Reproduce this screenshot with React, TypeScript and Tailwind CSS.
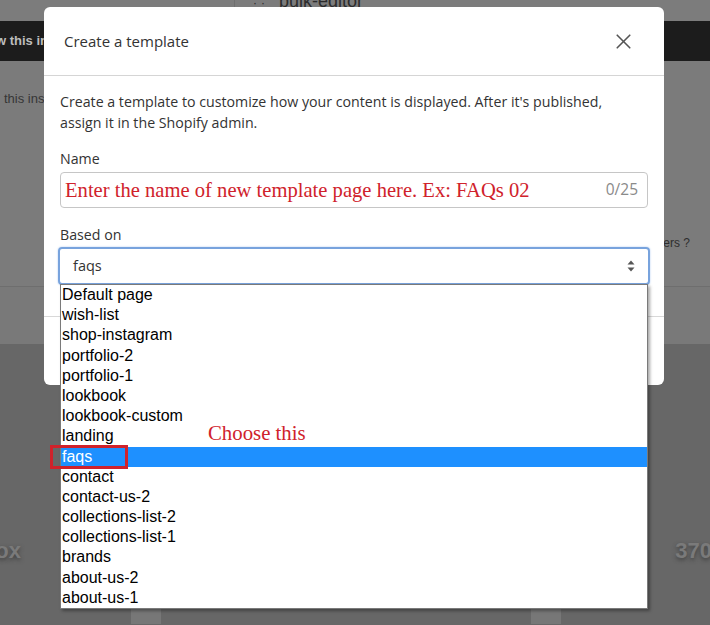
import { X } from "lucide-react";

const templates = [
  "Default page",
  "wish-list",
  "shop-instagram",
  "portfolio-2",
  "portfolio-1",
  "lookbook",
  "lookbook-custom",
  "landing",
  "faqs",
  "contact",
  "contact-us-2",
  "collections-list-2",
  "collections-list-1",
  "brands",
  "about-us-2",
  "about-us-1",
];

function SelectArrows() {
  return (
    <svg width="10" height="14" viewBox="0 0 10 14" className="text-[#555]">
      <path d="M5 1.5 L8.5 5.5 H1.5 Z" fill="currentColor" />
      <path d="M5 12.5 L8.5 8.5 H1.5 Z" fill="currentColor" />
    </svg>
  );
}

export default function App() {
  return (
    <div className="relative h-[625px] w-[710px] overflow-hidden bg-[#676767] font-['Liberation_Sans',sans-serif]">
      {/* dimmed page behind the modal */}
      <div className="flex h-[21px] bg-[#7c7c7c]">
        <div className="w-[235px] border-r border-[#6f6f6f]" />
        <div className="flex-1 overflow-hidden pl-[18px]">
          <div className="-mt-[9px] text-[18px] leading-[20px] text-[#2c2c2c]">
            <span className="mr-[10px] text-[12px] tracking-[4px]">··</span>bulk-editor
          </div>
        </div>
      </div>
      <div className="flex h-[40px] items-center bg-[#1c1c1c]">
        <span className="-ml-[4px] text-[13px] font-bold text-[#bdbdbd]">w this ins</span>
      </div>
      <div className="h-[226px] border-b border-[#6e6e6e] bg-[#7b7b7b]">
        <div className="pl-[4px] pt-[28px] text-[13px] text-[#363636]">this ins</div>
        <div className="mt-[125px] pr-[20px] text-right text-[12px] text-[#2e2e2e]">Can I change the covers ?</div>
      </div>
      <div className="h-[57px] bg-[#797979]" />
      <div className="flex h-[280px] flex-col">
        <div className="flex h-[263px] items-end justify-between pb-[40px] text-[22px] font-bold text-[#7a7a7a] [text-shadow:0_2px_4px_#3f3f3f]">
          <div className="flex w-[21px] justify-end">
            <span>box</span>
          </div>
          <span className="-mr-[2px]">370</span>
        </div>
        <div className="flex flex-1">
          <div className="ml-[131px] w-[30px] bg-[#777]" />
          <div className="ml-[370px] w-[30px] bg-[#777]" />
        </div>
      </div>

      {/* modal */}
      <div className="absolute left-[44px] top-[7px] h-[378px] w-[620px] rounded-[6px] bg-white font-['Open_Sans',sans-serif] text-[#333]">
        <div className="flex h-[69px] items-center justify-between border-b border-[#d5d5d5] pl-[20px] pr-[28px]">
          <span className="text-[15px] text-[#333]">Create a template</span>
          <X className="h-[25px] w-[25px] text-[#555]" strokeWidth={1.6} />
        </div>
        <div className="px-[16px] pt-[15px]">
          <p className="text-[14.2px] leading-[21px]">
            Create a template to customize how your content is displayed. After it's published,
            <br />
            assign it in the Shopify admin.
          </p>
          <div className="mt-[15px] text-[14.2px] leading-[21px]">Name</div>
          <div className="mt-[3px] flex h-[36px] items-center justify-between rounded-[4px] border border-[#c6c6c6] pl-[4px] pr-[9px]">
            <span className="font-['Liberation_Serif',serif] text-[20.6px] text-[#d0222b]">
              Enter the name of new template page here. Ex: FAQs 02
            </span>
            <span className="text-[15.5px] text-[#8a8a8a]">0/25</span>
          </div>
          <div className="mt-[16px] text-[14.2px] leading-[21px]">Based on</div>
          <div className="-mx-[2px] mt-[2px] flex h-[38px] items-center justify-between rounded-[4px] border-2 border-[#78a3dd] pl-[13px] pr-[12px] shadow-[0_0_2px_#a9c6ee]">
            <span className="text-[14.5px] text-[#333]">faqs</span>
            <SelectArrows />
          </div>
        </div>
        <div className="mt-[31px] border-t border-[#d8d8d8]" />
      </div>

      {/* open select list */}
      <div className="absolute left-[60px] top-[284px] w-[588px] border border-[#7a7a7a] bg-white shadow-[2px_2px_3px_rgba(0,0,0,0.35)]">
        {templates.map((t) => (
          <div
            key={t}
            className={
              t === "faqs"
                ? "h-[20.2px] bg-[#1e90ff] pl-[1px] text-[16px] leading-[20.2px] text-white"
                : "h-[20.2px] pl-[1px] text-[16px] leading-[20.2px] text-black"
            }
          >
            {t}
          </div>
        ))}
      </div>

      {/* annotations */}
      <div className="absolute left-[50px] top-[445px] h-[24px] w-[78px] border-[3px] border-[#d0222b]" />
      <div className="absolute left-[208px] top-[417px] font-['Liberation_Serif',serif] text-[20.8px] text-[#d0222b]">
        Choose this
      </div>
    </div>
  );
}
